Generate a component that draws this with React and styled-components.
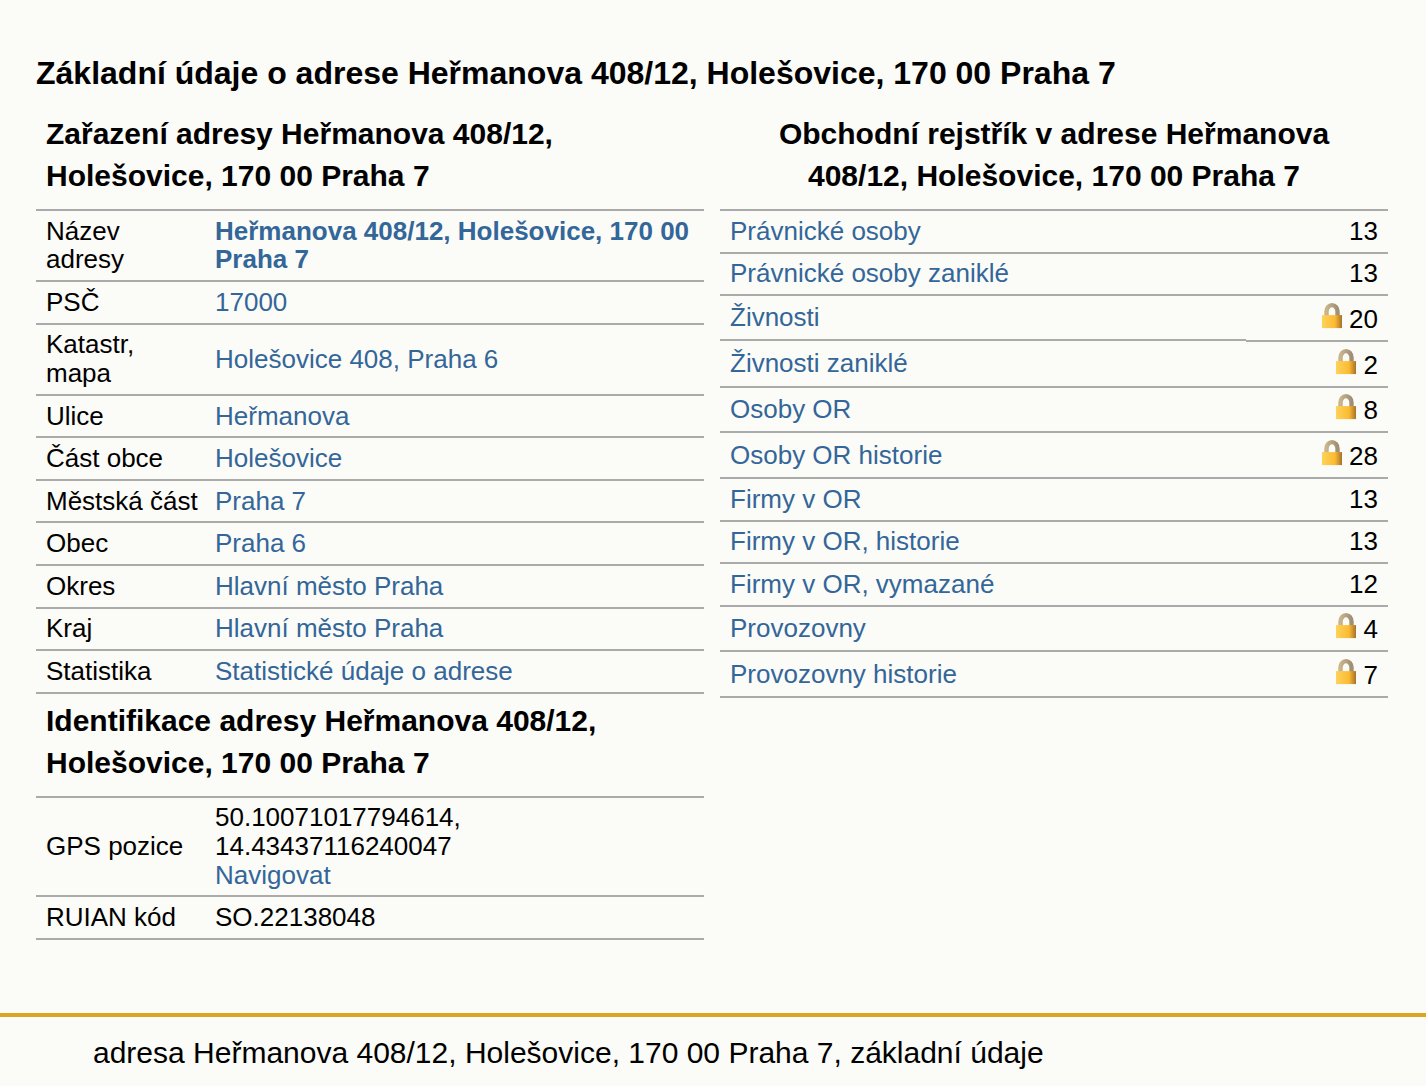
import React from 'react';
import styled, { createGlobalStyle } from 'styled-components';

const GlobalStyle = createGlobalStyle`
    html, body {
        margin: 0;
        padding: 0;
        background: #fbfbf7;
        color: #000;
        font-family: "Liberation Sans", Arial, sans-serif;
    }
`;

const Page = styled.div`
    width: 1426px;
    height: 1086px;
    overflow: hidden;
    display: flex;
    flex-direction: column;
`;

const Content = styled.main`
    height: 1013px;
    padding: 52px 38px 0 36px;
    box-sizing: border-box;
`;

const MainTitle = styled.h1`
    margin: 0 0 19px;
    font-size: 32px;
    line-height: 42px;
    font-weight: bold;
`;

const Columns = styled.div`
    display: grid;
    grid-template-columns: 668px 668px;
    column-gap: 16px;
    align-items: start;
`;

const Table = styled.table`
    width: 100%;
    border-collapse: collapse;
    font-size: 26px;
    line-height: 28.57px;
`;

const HeadCell = styled.th`
    padding: ${(p) => p.$top || 0}px 10px 12px;
    font-size: 30px;
    line-height: 42px;
    font-weight: bold;
    text-align: ${(p) => (p.$center ? 'center' : 'left')};
`;

const Row = styled.tr`
    border-bottom: 2px solid #aaa;
`;

const LabelCell = styled.td`
    width: 152px;
    padding: 5.8px 7px 6.2px 10px;
`;

const ValueCell = styled.td`
    padding: 5.8px 10px 6.2px;
    font-weight: ${(p) => (p.$bold ? 'bold' : 'normal')};
`;

// the rule under this cell sits one pixel higher than the one under the count
const NameCell = styled(ValueCell)`
    position: relative;
    &::after {
        content: ${(p) => (p.$raised ? '""' : 'none')};
        position: absolute;
        left: 0;
        right: 0;
        bottom: 0;
        height: 1px;
        background: #aaa;
        box-shadow: 0 2px 0 #fbfbf7;
    }
`;

const CountCell = styled.td`
    width: 122px;
    padding: 5.8px 10px 6.2px;
    text-align: right;
    white-space: nowrap;
`;

const Link = styled.a`
    color: #369;
    text-decoration: none;
`;

const LockIcon = styled.svg`
    width: 22px;
    height: 27.2px;
    margin-right: 6.5px;
    vertical-align: -1px;
`;

const Footer = styled.footer`
    flex: 1;
    border-top: 4px solid #daa520;
    padding: 19px 0 0 93px;
    font-size: 30px;
    line-height: 34px;
`;

const Lock = () => (
    <LockIcon viewBox="0 0 22 27">
        <defs>
            <linearGradient id="lockBody" x1="0" y1="0" x2="1" y2="0">
                <stop offset="0" stopColor="#fdd35a" />
                <stop offset="0.65" stopColor="#fbbb32" />
                <stop offset="1" stopColor="#a8722a" />
            </linearGradient>
            <linearGradient id="lockShackle" x1="0" y1="0" x2="1" y2="0">
                <stop offset="0" stopColor="#c9b48c" />
                <stop offset="1" stopColor="#a08f72" />
            </linearGradient>
        </defs>
        <path d="M5.5 14V9.500a5.500 6.500 0 0 1 11 0V14" fill="none" stroke="url(#lockShackle)" strokeWidth="4.4" />
        <rect x="1" y="13" width="20" height="13" fill="url(#lockBody)" />
    </LockIcon>
);

const addressRows = [
    { label: 'Název adresy', value: 'Heřmanova 408/12, Holešovice, 170 00 Praha 7', bold: true },
    { label: 'PSČ', value: '17000' },
    { label: 'Katastr, mapa', value: 'Holešovice 408, Praha 6' },
    { label: 'Ulice', value: 'Heřmanova' },
    { label: 'Část obce', value: 'Holešovice' },
    { label: 'Městská část', value: 'Praha 7' },
    { label: 'Obec', value: 'Praha 6' },
    { label: 'Okres', value: 'Hlavní město Praha' },
    { label: 'Kraj', value: 'Hlavní město Praha' },
    { label: 'Statistika', value: 'Statistické údaje o adrese' },
];

const registerRows = [
    { name: 'Právnické osoby', count: 13 },
    { name: 'Právnické osoby zaniklé', count: 13 },
    { name: 'Živnosti', count: 20, locked: true, raised: true },
    { name: 'Živnosti zaniklé', count: 2, locked: true },
    { name: 'Osoby OR', count: 8, locked: true },
    { name: 'Osoby OR historie', count: 28, locked: true },
    { name: 'Firmy v OR', count: 13 },
    { name: 'Firmy v OR, historie', count: 13 },
    { name: 'Firmy v OR, vymazané', count: 12 },
    { name: 'Provozovny', count: 4, locked: true },
    { name: 'Provozovny historie', count: 7, locked: true },
];

const App = () => (
    <Page>
        <GlobalStyle />
        <Content>
            <MainTitle>Základní údaje o adrese Heřmanova 408/12, Holešovice, 170 00 Praha 7</MainTitle>
            <Columns>
                <Table>
                    <tbody>
                        <Row>
                            <HeadCell colSpan={2}>Zařazení adresy Heřmanova 408/12, Holešovice, 170 00 Praha 7</HeadCell>
                        </Row>
                        {addressRows.map((row) => (
                            <Row key={row.label}>
                                <LabelCell>{row.label}</LabelCell>
                                <ValueCell $bold={row.bold}><Link href="#">{row.value}</Link></ValueCell>
                            </Row>
                        ))}
                        <Row>
                            <HeadCell $top={6} colSpan={2}>Identifikace adresy Heřmanova 408/12, Holešovice, 170 00 Praha 7</HeadCell>
                        </Row>
                        <Row>
                            <LabelCell>GPS pozice</LabelCell>
                            <ValueCell>
                                50.10071017794614,<br />14.43437116240047<br /><Link href="#">Navigovat</Link>
                            </ValueCell>
                        </Row>
                        <Row>
                            <LabelCell>RUIAN kód</LabelCell>
                            <ValueCell>SO.22138048</ValueCell>
                        </Row>
                    </tbody>
                </Table>
                <Table>
                    <tbody>
                        <Row>
                            <HeadCell $center colSpan={2}>Obchodní rejstřík v adrese Heřmanova 408/12, Holešovice, 170 00 Praha 7</HeadCell>
                        </Row>
                        {registerRows.map((row) => (
                            <Row key={row.name}>
                                <NameCell $raised={row.raised}><Link href="#">{row.name}</Link></NameCell>
                                <CountCell>{row.locked && <Lock />}{row.count}</CountCell>
                            </Row>
                        ))}
                    </tbody>
                </Table>
            </Columns>
        </Content>
        <Footer>adresa Heřmanova 408/12, Holešovice, 170 00 Praha 7, základní údaje</Footer>
    </Page>
);

export default App;
